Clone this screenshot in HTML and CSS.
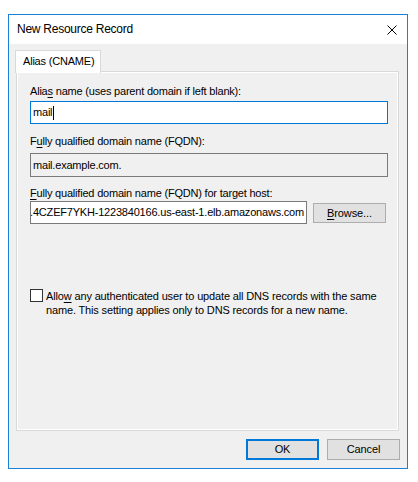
FILE: index.html
```html
<!DOCTYPE html>
<html>
<head>
<meta charset="utf-8">
<link rel="stylesheet" href="styles.css">
</head>
<body>
<div class="window">
  <div class="titlebar">
    <span class="title">New Resource Record</span>
    <svg class="close" width="10" height="10" viewBox="0 0 10 10"><path d="M0.5 0.5 L9.5 9.5 M9.5 0.5 L0.5 9.5" stroke="#000" stroke-width="1" fill="none"/></svg>
  </div>
  <div class="body">
    <div class="tabs"><div class="tab">Alias (CNAME)</div></div>
    <div class="panel">
      <div class="label l1">Alia<u>s</u> name (uses parent domain if left blank):</div>
      <div class="field focus"><span>mail</span><span class="caret"></span></div>
      <div class="label l2">F<u>u</u>lly qualified domain name (FQDN):</div>
      <div class="field readonly"><span>mail.example.com.</span></div>
      <div class="label l3"><u>F</u>ully qualified domain name (FQDN) for target host:</div>
      <div class="row">
        <div class="field target"><span>.4CZEF7YKH-1223840166.us-east-1.elb.amazonaws.com</span></div>
        <div class="btn browse"><span><u>B</u>rowse...</span></div>
      </div>
      <div class="check">
        <div class="box"></div>
        <div class="checktext">Allo<u>w</u> any authenticated user to update all DNS records with the same name. This setting applies only to DNS records for a new name.</div>
      </div>
    </div>
    <div class="buttons">
      <div class="btn ok">OK</div>
      <div class="btn cancel">Cancel</div>
    </div>
  </div>
</div>
</body>
</html>
```

FILE: styles.css
```css
* { box-sizing: border-box; }
html, body { margin: 0; padding: 0; background: #fff; }
body {
  font-family: "Liberation Sans", Arial, sans-serif;
  font-size: 11px;
  color: #000;
}
.window {
  margin: 14px 0 0 8px;
  width: 400px;
  height: 455px;
  border: 1px solid #1a80d8;
  display: flex;
  flex-direction: column;
}
.titlebar {
  height: 29px;
  background: #fff;
  display: flex;
  align-items: center;
  justify-content: space-between;
  padding: 0 10px 0 8px;
}
.title { font-size: 12px; line-height: 15px; letter-spacing: -0.25px; }
.close { display: block; }
.body {
  flex: 1;
  background: #f0f0f0;
  padding: 6px 8px 0 7px;
  display: flex;
  flex-direction: column;
}
.tabs { display: flex; height: 22px; margin-bottom: -1px; position: relative; z-index: 1; }
.tab {
  margin-left: -1px;
  width: 86px;
  height: 23px;
  background: #fff;
  border: 1px solid #d9d9d9;
  border-bottom: none;
  padding: 3px 0 0 7px;
  line-height: 15px;
  white-space: nowrap;
  letter-spacing: -0.2px;
}
.panel {
  flex: 1;
  border: 1px solid #d9d9d9;
  box-shadow: inset 0 0 0 1px #fff;
  padding: 12px 10px 0 13px;
  display: flex;
  flex-direction: column;
}
.label { line-height: 15px; letter-spacing: -0.2px; white-space: nowrap; }
.l2 { margin-top: 10px; }
.l3 { margin-top: 9px; }
u { text-decoration-thickness: 1px; text-underline-offset: 2px; }
.field {
  height: 23px;
  border: 1px solid #7a7a7a;
  background: #fff;
  display: flex;
  align-items: center;
  padding: 0 2px;
  line-height: 15px;
  white-space: nowrap;
  overflow: hidden;
  letter-spacing: -0.2px;
}
.focus { margin-top: 2px; border-color: #0078d7; }
.caret { width: 1px; height: 14px; background: #000; margin-left: 1px; }
.readonly { margin-top: 4px; background: #f0f0f0; height: 24px; }
.row { display: flex; align-items: flex-start; }
.target { width: 277px; justify-content: flex-end; padding: 0 2px 0 0; }
.btn {
  background: #e1e1e1;
  border: 1px solid #adadad;
  display: flex;
  align-items: center;
  justify-content: center;
  line-height: 15px;
  letter-spacing: -0.1px;
}
.browse { width: 73px; height: 20px; margin: 2px 0 0 6px; }
.check { display: flex; align-items: flex-start; margin-top: 65px; }
.box { width: 13px; height: 13px; border: 1px solid #333; background: #fff; flex: none; }
.checktext { margin-left: 3px; line-height: 14px; letter-spacing: -0.15px; width: 340px; }
.buttons {
  display: flex;
  justify-content: flex-end;
  gap: 8px;
  margin: 8px -1px 0 0;
  height: 29px;
}
.ok, .cancel { width: 73px; height: 21px; }
.ok { border: 2px solid #0078d7; }
```
